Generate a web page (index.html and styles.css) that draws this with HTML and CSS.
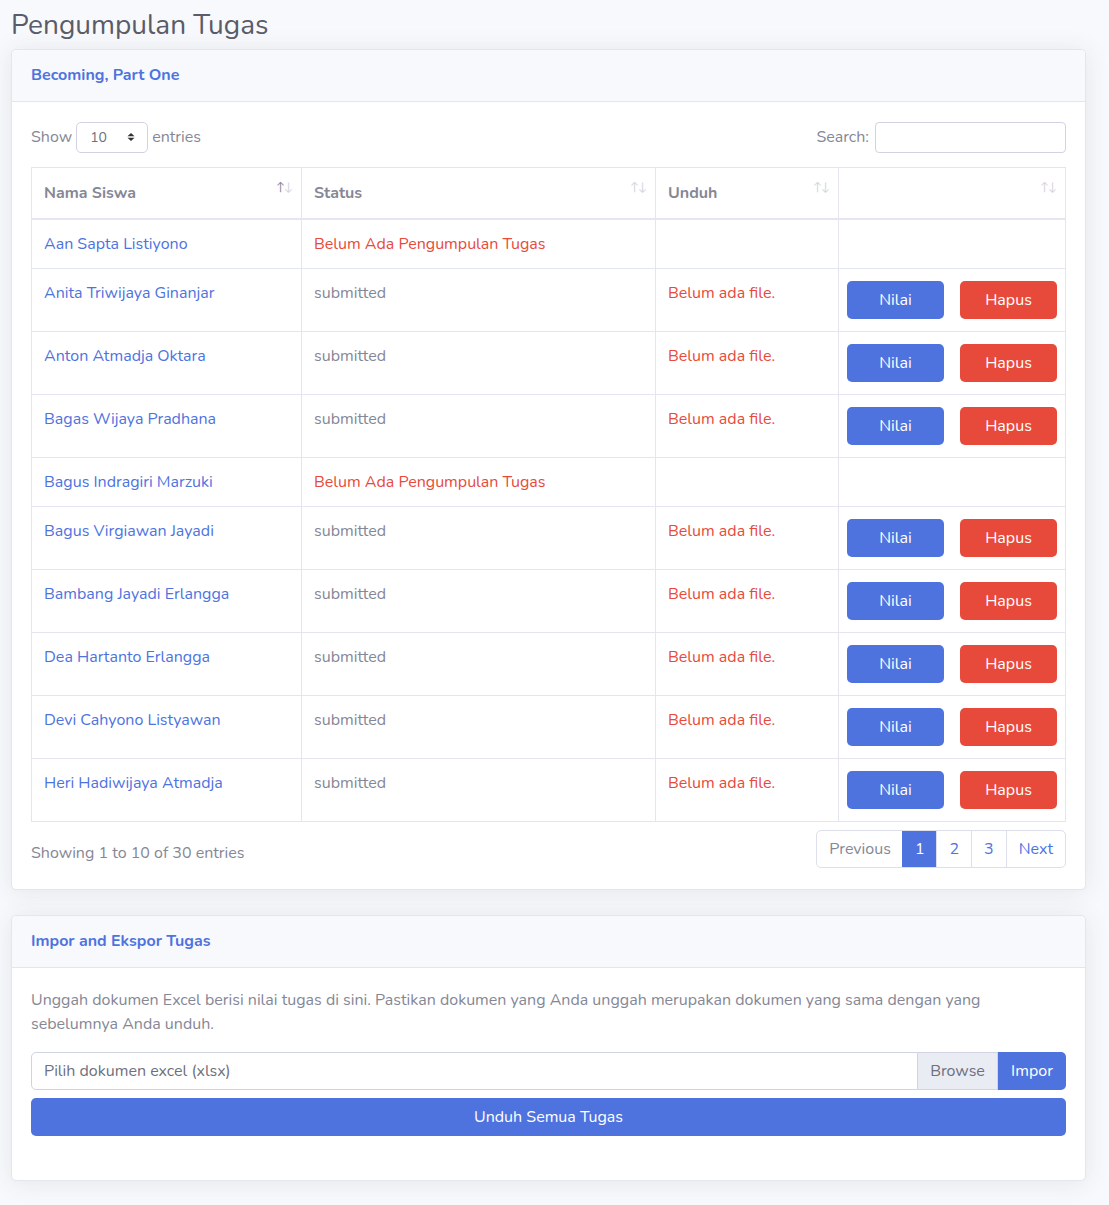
FILE: index.html
```html
<!DOCTYPE html>
<html>
<head>
<meta charset="utf-8">
<link rel="stylesheet" href="styles.css">
</head>
<body>
<div class="page">
  <h1 class="title">Pengumpulan Tugas</h1>
  <div class="card">
    <div class="card-header">Becoming, Part One</div>
    <div class="card-body">
      <div class="dt-top">
        <div class="dt-length">Show <span class="select">10<svg width="8" height="10" viewBox="0 0 8 10"><path d="M4 1 L7.5 4.2 H0.5 Z M4 9 L7.5 5.8 H0.5 Z" fill="#333"/></svg></span> entries</div>
        <div class="dt-search">Search: <span class="search-input"></span></div>
      </div>
      <table class="tbl">
        <colgroup><col class="c1"><col class="c2"><col class="c3"><col class="c4"></colgroup>
        <thead>
          <tr>
            <th>Nama Siswa<span class="sort"><span class="on">↑</span>↓</span></th>
            <th>Status<span class="sort">↑↓</span></th>
            <th>Unduh<span class="sort">↑↓</span></th>
            <th><span class="sort">↑↓</span></th>
          </tr>
        </thead>
        <tbody>
          <tr class="short"><td class="name">Aan Sapta Listiyono</td><td class="red">Belum Ada Pengumpulan Tugas</td><td></td><td></td></tr>
          <tr><td class="name">Anita Triwijaya Ginanjar</td><td>submitted</td><td class="red">Belum ada file.</td><td class="acts"><span class="btn btn-primary">Nilai</span><span class="btn btn-danger">Hapus</span></td></tr>
          <tr><td class="name">Anton Atmadja Oktara</td><td>submitted</td><td class="red">Belum ada file.</td><td class="acts"><span class="btn btn-primary">Nilai</span><span class="btn btn-danger">Hapus</span></td></tr>
          <tr><td class="name">Bagas Wijaya Pradhana</td><td>submitted</td><td class="red">Belum ada file.</td><td class="acts"><span class="btn btn-primary">Nilai</span><span class="btn btn-danger">Hapus</span></td></tr>
          <tr class="short"><td class="name">Bagus Indragiri Marzuki</td><td class="red">Belum Ada Pengumpulan Tugas</td><td></td><td></td></tr>
          <tr><td class="name">Bagus Virgiawan Jayadi</td><td>submitted</td><td class="red">Belum ada file.</td><td class="acts"><span class="btn btn-primary">Nilai</span><span class="btn btn-danger">Hapus</span></td></tr>
          <tr><td class="name">Bambang Jayadi Erlangga</td><td>submitted</td><td class="red">Belum ada file.</td><td class="acts"><span class="btn btn-primary">Nilai</span><span class="btn btn-danger">Hapus</span></td></tr>
          <tr><td class="name">Dea Hartanto Erlangga</td><td>submitted</td><td class="red">Belum ada file.</td><td class="acts"><span class="btn btn-primary">Nilai</span><span class="btn btn-danger">Hapus</span></td></tr>
          <tr><td class="name">Devi Cahyono Listyawan</td><td>submitted</td><td class="red">Belum ada file.</td><td class="acts"><span class="btn btn-primary">Nilai</span><span class="btn btn-danger">Hapus</span></td></tr>
          <tr><td class="name">Heri Hadiwijaya Atmadja</td><td>submitted</td><td class="red">Belum ada file.</td><td class="acts"><span class="btn btn-primary">Nilai</span><span class="btn btn-danger">Hapus</span></td></tr>
        </tbody>
      </table>
      <div class="dt-bottom">
        <div class="dt-info">Showing 1 to 10 of 30 entries</div>
        <div class="pagination">
          <span class="pg disabled">Previous</span><span class="pg active">1</span><span class="pg">2</span><span class="pg">3</span><span class="pg">Next</span>
        </div>
      </div>
    </div>
  </div>

  <div class="card card2">
    <div class="card-header">Impor and Ekspor Tugas</div>
    <div class="card-body body2">
      <p class="desc">Unggah dokumen Excel berisi nilai tugas di sini. Pastikan dokumen yang Anda unggah merupakan dokumen yang sama dengan yang sebelumnya Anda unduh.</p>
      <div class="input-group">
        <div class="file-label">Pilih dokumen excel (xlsx)</div>
        <div class="browse">Browse</div>
        <div class="impor">Impor</div>
      </div>
      <div class="btn-block">Unduh Semua Tugas</div>
    </div>
  </div>
</div>
</body>
</html>
```
FILE: styles.css
```css
* { box-sizing: border-box; }
html, body { margin: 0; padding: 0; }
body {
  background: #f8f9fc;
  font-family: "Nunito", "Lato", "Noto Sans", sans-serif;
  font-size: 16px;
  color: #858796;
  line-height: 1.5;
}
.page { padding: 0 23px 25px 11px; }
.title {
  margin: 0;
  padding: 9px 0 6px 0;
  font-size: 28px;
  font-weight: 400;
  color: #5a5c69;
  line-height: 1.2;
}
.card {
  background: #fff;
  border: 1px solid #e3e6f0;
  border-radius: 5px;
  box-shadow: 0 2px 24px rgba(58,59,69,0.10);
}
.card2 { margin-top: 25px; }
.card-header {
  background: #f8f9fc;
  border-bottom: 1px solid #e3e6f0;
  padding: 12px 19px;
  height: 52px;
  font-weight: 700;
  color: #4e73df;
  font-size: 16px;
  line-height: 26px;
  border-radius: 5px 5px 0 0;
}
.card-body { padding: 20px 19px 21px 19px; }
.dt-top {
  display: flex;
  justify-content: space-between;
  align-items: center;
  height: 31px;
  margin-bottom: 14px;
}
.dt-length, .dt-search { display: flex; align-items: center; gap: 4px; font-size: 16px; }
.select {
  display: inline-flex;
  align-items: center;
  justify-content: space-between;
  width: 72px;
  height: 31px;
  border: 1px solid #d1d3e2;
  border-radius: 5px;
  padding: 0 12px 0 13px;
  color: #6e707e;
  font-size: 14px;
  margin-right: 0;
}
.search-input {
  display: inline-block;
  width: 191px;
  height: 31px;
  border: 1px solid #d1d3e2;
  border-radius: 4px;
  margin-left: 2px;
}
.tbl {
  width: 100%;
  border-collapse: collapse;
  border: 1px solid #e3e6f0;
  table-layout: fixed;
}
.c1 { width: 270px; }
.c2 { width: 354px; }
.c3 { width: 183px; }
.c4 { width: 227px; }
.tbl th, .tbl td {
  border: 1px solid #e3e6f0;
  padding: 12px 12px;
  vertical-align: top;
  text-align: left;
}
.tbl th {
  position: relative;
  height: 52px;
  padding-top: 13px;
  font-weight: 700;
  color: #858796;
  border-bottom: 2px solid #e3e6f0;
}
.sort {
  position: absolute;
  right: 9px;
  top: 10px;
  font-size: 12px;
  color: #d4d5db;
  font-weight: 400;
  letter-spacing: -1px;
}
.sort .on { color: #858796; }
.tbl td { height: 63px; }
.tbl tr.short td { height: 49px; }
.tbl td.name { color: #4e73df; }
.tbl td.red { color: #e74a3b; }
.tbl td.acts { padding: 12px 8px 10px 8px; }
.acts { white-space: nowrap; }
.btn {
  display: inline-block;
  width: 97px;
  height: 38px;
  line-height: 38px;
  text-align: center;
  color: #fff;
  border-radius: 5px;
  font-size: 16px;
}
.btn-primary { background: #4e73df; }
.btn-danger { background: #e74a3b; margin-left: 16px; }
.dt-bottom {
  display: flex;
  justify-content: space-between;
  align-items: flex-start;
  padding-top: 8px;
}
.dt-info { padding-top: 11px; font-size: 16px; }
.pagination {
  display: flex;
  border: 1px solid #dddfeb;
  border-radius: 5px;
  overflow: hidden;
  height: 38px;
}
.pg {
  display: block;
  padding: 0 12px;
  line-height: 36px;
  color: #4e73df;
  border-left: 1px solid #dddfeb;
}
.pg:first-child { border-left: 0; }
.pg.disabled { color: #858796; padding: 0 11px 0 12px; }
.pg.active { background: #4e73df; color: #fff; border-color: #4e73df; padding: 0 12px; }
.body2 { padding: 20px 19px 44px 19px; }
.desc { margin: 0 0 16px 0; font-size: 16px; line-height: 24px; }
.input-group {
  display: flex;
  height: 38px;
}
.file-label {
  flex: 1;
  border: 1px solid #d1d3e2;
  border-radius: 5px 0 0 5px;
  padding: 0 12px;
  line-height: 36px;
  color: #6e707e;
  font-size: 16px;
}
.browse {
  width: 80px;
  background: #eaecf4;
  border: 1px solid #d1d3e2;
  border-left: 0;
  line-height: 36px;
  text-align: center;
  color: #6e707e;
}
.impor {
  width: 68px;
  background: #4e73df;
  color: #fff;
  line-height: 38px;
  text-align: center;
  border-radius: 0 5px 5px 0;
}
.btn-block {
  margin-top: 8px;
  height: 38px;
  line-height: 38px;
  text-align: center;
  background: #4e73df;
  color: #fff;
  border-radius: 5px;
}
```
